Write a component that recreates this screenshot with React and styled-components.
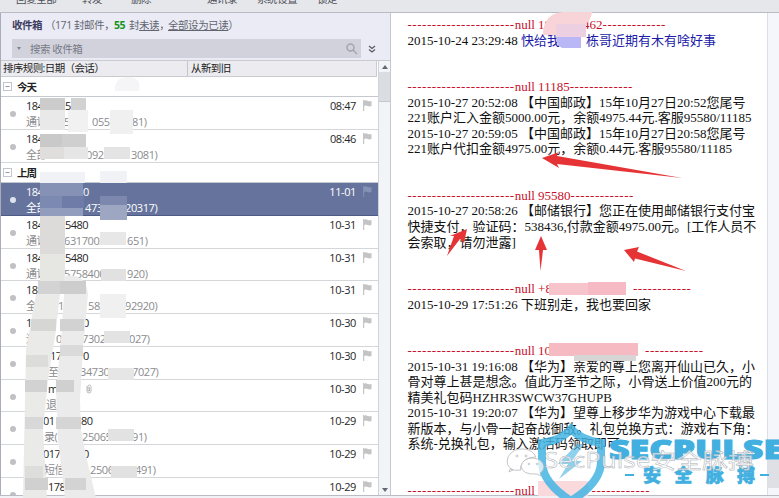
import React from 'react';
import styled, { createGlobalStyle } from 'styled-components';

const GlobalStyle = createGlobalStyle`
  * { box-sizing: border-box; }
  body { margin: 0; background: #fff; overflow: hidden; }
`;

const Window = styled.div`
  position: relative;
  display: flex;
  flex-direction: column;
  width: 779px;
  height: 498px;
  overflow: hidden;
  background: #f1f2f6;
  font-family: 'Open Sans', 'Noto Sans CJK SC', sans-serif;
  font-size: 12px;
  color: #222;
`;

const Toolbar = styled.div`
  flex: none;
  display: flex;
  height: 13px;
  padding-left: 16px;
  background: #e6e7eb;
  border-bottom: 1px solid #b9bcc4;
  overflow: hidden;
`;

const Tool = styled.span`
  width: ${(p) => p.$w}px;
  margin-top: -8px;
  font-size: 10.5px;
  line-height: 15px;
  letter-spacing: -0.4px;
  color: #4d5058;
  white-space: nowrap;
`;

const Body = styled.div`
  flex: none;
  display: flex;
  height: 483px;
  border-bottom: 1px solid #b9bcc3;
`;

const MailPane = styled.section`
  flex: none;
  display: flex;
  flex-direction: column;
  width: 391px;
  border-left: 1px solid #a9adb8;
  border-right: 1px solid #c4c8d2;
  background: #eaebf5;
`;

const Header = styled.header`
  flex: none;
  height: 48px;
  padding: 3px 0 0 11px;
  border-bottom: 1px solid #c9cbd4;
`;

const Title = styled.div`
  display: flex;
  height: 20px;
  line-height: 18px;
  font-size: 10.5px;
  letter-spacing: -0.45px;
  color: #62646e;
  white-space: pre;
  b { color: #3b3c60; }
  strong { color: #16931a; }
  u { text-underline-offset: 1px; }
`;

const TitlePart = styled.span`
  width: ${(p) => p.$w}px;
`;

const SearchRow = styled.div`
  display: flex;
  align-items: center;
  margin-top: 3px;
  gap: 7px;
`;

const SearchBox = styled.div`
  display: flex;
  align-items: center;
  width: 349px;
  height: 19px;
  padding: 0 3px 0 5px;
  background: #d2d2dc;
  color: #777984;
  font-size: 10.5px;
  letter-spacing: -0.5px;
  span { flex: 1; margin-left: 9px; }
`;

const ListArea = styled.div`
  flex: 1;
  display: flex;
  min-height: 0;
`;

const List = styled.div`
  width: 378px;
  background: #fff;
  overflow: hidden;
`;

const SortBar = styled.div`
  display: flex;
  width: 376px;
  height: 16px;
  line-height: 15px;
  padding-left: 2px;
  background: #ececf0;
  border: solid #cacbd0;
  border-width: 0 1px 1px 0;
  font-size: 10.5px;
  letter-spacing: -0.6px;
  color: #222;
`;

const SortCell = styled.span`
  width: ${(p) => p.$w}px;
  padding-left: ${(p) => (p.$split ? 3 : 0)}px;
  border-left: ${(p) => (p.$split ? '1px solid #c3c4cc' : 'none')};
`;

const Group = styled.div`
  display: flex;
  align-items: center;
  gap: 5px;
  height: ${(p) => p.$h}px;
  padding-left: 2px;
  border-bottom: 1px solid #c4c8cf;
  font-size: 10.5px;
  font-weight: 700;
  letter-spacing: -0.9px;
`;

const Row = styled.div`
  display: flex;
  height: 32.75px;
  padding: 1px 6px 0 9px;
  border-bottom: 1px solid ${(p) => (p.$active ? '#4e5b86' : '#d5d6da')};
  background: ${(p) => (p.$active ? '#66749d' : '#fff')};
  color: ${(p) => (p.$active ? '#fff' : '#262626')};
`;

const Dot = styled.i`
  width: 6px;
  height: 6px;
  margin: 13px 10px 0 0;
  border-radius: 3px;
  background: ${(p) => (p.$active ? '#dfe3ee' : '#c0c0c5')};
`;

const Lines = styled.div`
  flex: 1;
  min-width: 0;
`;

const TextLine = styled.div`
  display: flex;
  height: 16px;
  line-height: 16px;
  font-size: 11px;
  letter-spacing: ${(p) => (p.$sub ? -0.4 : -0.55)}px;
  white-space: nowrap;
  color: ${(p) => (p.$sub && !p.$active ? '#8b8b8e' : 'inherit')};
`;

const Piece = styled.span`
  flex: none;
  width: ${(p) => p.$w}px;
`;

const When = styled.div`
  display: flex;
  justify-content: flex-end;
  gap: 7px;
  height: 16px;
  line-height: 16px;
  font-size: 11px;
  letter-spacing: -0.4px;
  svg { margin-top: 2px; }
`;

const Scroll = styled.div`
  display: flex;
  flex-direction: column;
  justify-content: space-between;
  align-items: center;
  width: 12px;
  border-left: 1px solid #cfd3dc;
  background: #f3f4f7;
`;

const Thumb = styled.div`
  width: 11px;
  height: 30px;
  margin-bottom: auto;
  background: #dcdde3;
  border-bottom: 1px solid #c6c8d0;
`;

const ArrowBox = styled.div`
  display: flex;
  justify-content: center;
  align-items: center;
  height: 11px;
`;

const Reader = styled.section`
  flex: 1;
  display: flex;
  background: #fff;
`;

const Message = styled.div`
  width: 376px;
  padding: 4.3px 0 0 16.5px;
  overflow: hidden;
  font-family: 'Liberation Serif', 'Noto Sans CJK SC', serif;
  font-size: 13px;
  color: #111;
`;

const MsgLine = styled.div`
  display: flex;
  height: 15.53px;
  line-height: 15.53px;
  white-space: pre;
  color: ${(p) => (p.$head ? '#c8102a' : 'inherit')};
`;

const Blue = styled.span`
  color: #1c1ca8;
`;

const Dashes = styled.span`
  letter-spacing: 0.54px;
`;

const ReaderScroll = styled.div`
  flex: 1;
  display: flex;
  align-items: flex-end;
  border-left: 1px solid #dcdfe8;
  background: #f5f6fb;
`;

const ReaderThumb = styled.div`
  width: 11px;
  height: 28px;
  margin-bottom: 7px;
  background: #dfe0e6;
`;

const Overlay = styled.svg`
  position: absolute;
  inset: 0;
  pointer-events: none;
`;

const Flag = ({ active }) => (
  <svg width="9" height="11" viewBox="0 0 9 11">
    <path d="M.7 0v11" stroke={active ? '#8592b7' : '#bbb'} strokeWidth="1" />
    <path d="M1 .7q2-.8 3.8.3q1.7.7 3.7 0v5q-2 .8-3.8.1Q3 5.200 1 6z" fill={active ? '#8592b7' : '#c4c4c6'} />
  </svg>
);

const Collapse = () => (
  <svg width="9" height="9" viewBox="0 0 9 9">
    <rect x=".5" y=".5" width="8" height="8" fill="#fff" stroke="#c3c6cc" />
    <path d="M2.500 4.500h4" stroke="#8d98ae" />
  </svg>
);

const rows = [
  { a: [['184', 39], ['5', 12]], b: [['通讯', 38], ['5', 28], ['0553', 40], ['81)', 20]], t: '08:47' },
  { a: [['184', 39]], b: [['全部', 60], ['0920', 45], ['3081)', 30]], t: '08:46' },
  { a: [['184', 57], ['0', 10]], b: [['全部', 59], ['473', 40], ['20317)', 34]], t: '11-01', active: true },
  { a: [['184', 39], ['5480', 30]], b: [['通讯', 38], ['6317002', 63], ['651)', 30]], t: '10-31' },
  { a: [['184', 39], ['5480', 30]], b: [['通讯', 38], ['5758400', 63], ['920)', 30]], t: '10-31' },
  { a: [['18', 39]], b: [['全', 32], ['1', 30], ['584', 37], ['92920)', 34]], t: '10-31' },
  { a: [['1', 57], ['0', 10]], b: [['通', 30], ['0', 26], ['7302', 47], ['027)', 30]], t: '10-30' },
  { a: [['', 24], ['17', 33], ['0', 10]], b: [['', 22], ['至', 32], ['34730', 52], ['7027)', 34]], t: '10-30' },
  { a: [['', 22], ['m', 38]], b: [['', 20], ['退', 20]], t: '10-30', clip: true },
  { a: [['', 17], ['01', 38], ['80', 14]], b: [['', 18], ['录(', 38], ['25065', 50], ['91)', 25]], t: '10-29' },
  { a: [['', 17], ['017', 40], ['0', 10]], b: [['', 18], ['短信', 46], ['2506', 45], ['491)', 30]], t: '10-29' },
  { a: [['', 22], ['178', 40]], b: [], t: '10-29' },
];

const Clip = () => (
  <svg width="6" height="13" viewBox="0 0 6 13">
    <path d="M1 5v5a2 2 0 0 0 4 0V5.500a1.500 1.500 0 0 0-3 0V10h1.500V6" fill="none" stroke="#aaa" strokeWidth=".8" />
  </svg>
);

const Mail = ({ item }) => (
  <Row $active={item.active}>
    <Dot $active={item.active} />
    <Lines>
      <TextLine>
        {item.a.map(([s, w], i) => <Piece key={i} $w={w}>{s}</Piece>)}
        {item.clip && <Clip />}
      </TextLine>
      <TextLine $sub $active={item.active}>
        {item.b.map(([s, w], i) => <Piece key={i} $w={w}>{s}</Piece>)}
      </TextLine>
    </Lines>
    <When>{item.t}<Flag active={item.active} /></When>
  </Row>
);

const Head = ({ id, gap = 0, end = '', tail = 13 }) => (
  <MsgLine $head>
    <Dashes>{'-'.repeat(22)}</Dashes>null {id}
    <Piece $w={gap} />{end}
    <Dashes>{'-'.repeat(tail)}</Dashes>
  </MsgLine>
);

const Blank = ({ n }) => Array.from({ length: n }, (_, i) => <MsgLine key={i} />);

// Mosaic tiles covering private details: x, y, width, height, colour
const tiles = [
  [40, 98, 25, 12, '#cdcccc'], [71, 98, 15, 12, '#d3d2d2'], [40, 110, 25, 20, '#e9e9e9'], [68, 110, 20, 22, '#f1f1f1'],
  [110, 110, 23, 24, '#f0f0f1'], [40, 134, 22, 13, '#cac9c9'], [62, 134, 24, 13, '#d0cfcf'],
  [40, 147, 24, 12, '#dfdedd'], [64, 147, 24, 12, '#e7e6e6'], [104, 147, 26, 12, '#e4e4e4'],
  [40, 172, 45, 11, '#f1f2f5'], [100, 171, 27, 12, '#f1f2f5'],
  [40, 183, 43, 13, '#8591b5'], [40, 196, 22, 12, '#7c89b0'], [62, 196, 22, 12, '#6e7ca7'], [40, 208, 43, 8, '#929dbd'],
  [100, 196, 27, 9, '#7c88ae'], [100, 205, 27, 15, '#9da7c2'],
  [40, 216, 25, 38, '#dcdbda'], [40, 254, 25, 27, '#e6e6e3'], [100, 232, 26, 13, '#e7e7e7'], [101, 269, 25, 12, '#e1e1e2'],
  [38, 281, 22, 13, '#d4d3d3'], [60, 281, 26, 13, '#cecdcd'], [100, 294, 26, 24, '#f0f0f0'],
  [104, 331, 26, 12, '#e3e3e3'], [108, 368, 26, 12, '#e6e6e6'], [108, 429, 26, 12, '#e2e2e2'], [111, 466, 26, 12, '#e1e1e2'],
];
const darkTiles = [
  [38, 281, 22, 13, '#d4d3d3'], [60, 281, 26, 13, '#cecdcd'],
  [31, 319, 25, 12, '#d6d6d5'], [60, 319, 24, 12, '#d3d2d2'], [26, 355, 22, 12, '#dcdcdb'], [60, 345, 23, 11, '#dadada'],
  [25, 380, 22, 12, '#d2d2d2'], [56, 380, 18, 12, '#d0d0d0'], [25, 417, 18, 12, '#d8d8d8'], [56, 417, 25, 12, '#d5d5d5'],
  [25, 466, 18, 12, '#dddddc'], [25, 478, 23, 12, '#cfd0cf'], [65, 478, 21, 12, '#d3d3d3'],
];
const Tile = ({ t }) => <rect x={t[0]} y={t[1]} width={t[2]} height={t[3]} fill={t[4]} />;

const Annotations = () => (
  <Overlay width="779" height="498" viewBox="0 0 779 498">
    <path d="M115 91q-1-14 13-14t11 14z" fill="#f5f5f8" />
    {tiles.map((t, i) => <Tile key={i} t={t} />)}
    <path d="M36 294H60L56 330L48 380L43 430L47 498H23L26 350z" fill="#eaeae9" />
    <path d="M64 294V276Q86 272 88 294L83 350L80 400L81 430L87 460L96 498H65L58 440L56 390L61 340z" fill="#ebebeb" />
    {darkTiles.map((t, i) => <Tile key={i} t={t} />)}

    <path d="M543 35Q543 13 564 12H592Q591 20 586 24V35z" fill="#f8d3d8" />
    <rect x="556" y="24" width="30" height="13" fill="#edcfe2" />
    <path d="M556 37H581V48H562Q556 45 556 37z" fill="#b9b7f6" />
    <path d="M549 283H626V295H549z" fill="#f8c4cc" />
    <rect x="588" y="282" width="38" height="13" fill="#f6bac4" />
    <rect x="549" y="343" width="89" height="13" fill="#f5bac2" />
    <rect x="574" y="355" width="62" height="6" fill="#d8d5d6" />
    <path d="M538 481H588V496H538z" fill="#f9d9dc" />

    <g fill="#e63436">
      <path d="M542 158L558 152.500L557 156L682 178L557 164L559 168z" />
      <path d="M467 229L464 243L460 239L447 256L454 236L450 236z" />
      <path d="M541 236L547 250H543L540.500 271L539 250H535z" />
      <path d="M624 250L639 247L637 251.500L686 271L635 258.500L634 262z" />
    </g>

    <path d="M542 443Q562 440 571 429Q581 440 601 443V463Q600 483 571 501Q543 483 542 463z" fill="none" stroke="#43b4e3" strokeOpacity=".85" strokeWidth="8" />
    <path d="M577 444L558 464H568L559 479L582 461H572L584 444z" fill="#43b4e3" fillOpacity=".6" />
    <g fill="#41afe0" fontFamily="'Open Sans', 'Noto Sans CJK SC', sans-serif" fontWeight="800">
      <text x="609" y="459" fontSize="26" textLength="174" lengthAdjust="spacingAndGlyphs" stroke="#41afe0" strokeWidth="1">SECPULSE</text>
      <path d="M625 474h9v2h-9zM760 474h9v2h-9z" />
      <text x="643" y="482" fontSize="18" textLength="112" stroke="#41afe0" strokeWidth=".6">安全脉搏</text>
    </g>
    <g fill="#fff" stroke="#b5b8bd" strokeWidth=".8" fillOpacity=".7">
      <path d="M510 469l-1 3 4-2q-8-4-5-13q5-9 16-8q9 1 12 8q-12 0-15 9q-1 2 0 4q-6 1-11-1z" />
      <path d="M521 466q2-8 12-8q10 1 11 9q-1 5-4 6l1 3-4-2q-15 1-16-8z" />
      <circle cx="517" cy="456" r="1" /><circle cx="526" cy="456" r="1" />
      <circle cx="529" cy="464" r=".8" /><circle cx="537" cy="464" r=".8" />
    </g>
    <text x="544" y="468" fontFamily="'Open Sans', 'Noto Sans CJK SC', sans-serif" fontSize="21" textLength="210" lengthAdjust="spacingAndGlyphs" fill="#fff" fillOpacity=".7" stroke="#a9adb4" strokeWidth=".45">SecPulse安全脉搏</text>
  </Overlay>
);

const tools = [['回复全部', 66], ['转发', 49], ['删除', 76], ['通讯录', 50], ['系统设置', 60], ['锁定', 60]];

export default function App() {
  return (
    <Window>
      <GlobalStyle />
      <Toolbar>{tools.map(([s, w]) => <Tool key={s} $w={w}>{s}</Tool>)}</Toolbar>
      <Body>
        <MailPane>
          <Header>
            <Title>
              <TitlePart $w={33}><b>收件箱</b></TitlePart>
              <TitlePart $w={69}>（171 封邮件，</TitlePart>
              <TitlePart $w={15}><strong>55</strong></TitlePart>
              <TitlePart $w={39}>封<u>未读</u>，</TitlePart>
              <span><u>全部设为已读</u>）</span>
            </Title>
            <SearchRow>
              <SearchBox>
                <svg width="4" height="3"><path d="M0 0h4L2 3z" fill="#81838c" /></svg>
                <span>搜索 收件箱</span>
                <svg width="12" height="12" viewBox="0 0 12 12" fill="none" stroke="#a3a4ae" strokeWidth="1.5"><circle cx="4.500" cy="4.500" r="3.500" /><path d="M7 7l4 4" /></svg>
              </SearchBox>
              <svg width="8" height="8" viewBox="0 0 8 8" fill="none" stroke="#555862" strokeWidth="1.200"><path d="M1 1l3 2.500L7 1M1 4.500L4 7l3-2.500" /></svg>
            </SearchRow>
          </Header>
          <ListArea>
            <List>
              <SortBar>
                <SortCell $w={184}>排序规则:日期（会话）</SortCell>
                <SortCell $w={150} $split>从新到旧</SortCell>
              </SortBar>
              <Group $h={20}><Collapse />今天</Group>
              {rows.slice(0, 2).map((r, i) => <Mail key={i} item={r} />)}
              <Group $h={20.6}><Collapse />上周</Group>
              {rows.slice(2).map((r, i) => <Mail key={i} item={r} />)}
            </List>
            <Scroll>
              <ArrowBox><svg width="6" height="4"><path d="M0 4L3 0l3 4z" fill="#656872" /></svg></ArrowBox>
              <Thumb />
              <ArrowBox><svg width="6" height="4"><path d="M0 0h6L3 4z" fill="#656872" /></svg></ArrowBox>
            </Scroll>
          </ListArea>
        </MailPane>
        <Reader>
          <Message>
            <Head id="18" gap={32} end="462" />
            <MsgLine>2015-10-24 23:29:48 <Blue>快给我</Blue><Piece $w={26} /><Blue>栋哥近期有木有啥好事</Blue></MsgLine>
            <Blank n={2} />
            <Head id="11185" />
            <MsgLine>2015-10-27 20:52:08 【中国邮政】15年10月27日20:52您尾号</MsgLine>
            <MsgLine>221账户汇入金额5000.00元，余额4975.44元.客服95580/11185</MsgLine>
            <MsgLine>2015-10-27 20:59:05 【中国邮政】15年10月27日20:58您尾号</MsgLine>
            <MsgLine>221账户代扣金额4975.00元，余额0.44元.客服95580/11185</MsgLine>
            <Blank n={2} />
            <Head id="95580" />
            <MsgLine>2015-10-27 20:58:26 【邮储银行】您正在使用邮储银行支付宝</MsgLine>
            <MsgLine>快捷支付，验证码：538436,付款金额4975.00元。[工作人员不</MsgLine>
            <MsgLine>会索取，请勿泄露]</MsgLine>
            <Blank n={2} />
            <Head id="+8" gap={81} tail={12} />
            <MsgLine>2015-10-29 17:51:26 下班别走，我也要回家</MsgLine>
            <Blank n={2} />
            <Head id="10" gap={94} tail={12} />
            <MsgLine>2015-10-31 19:16:08 【华为】亲爱的尊上您离开仙山已久，小</MsgLine>
            <MsgLine>骨对尊上甚是想念。值此万圣节之际，小骨送上价值200元的</MsgLine>
            <MsgLine>精美礼包码HZHR3SWCW37GHUPB</MsgLine>
            <MsgLine>2015-10-31 19:20:07 【华为】望尊上移步华为游戏中心下载最</MsgLine>
            <MsgLine>新版本，与小骨一起奋战御敌。礼包兑换方式：游戏右下角：</MsgLine>
            <MsgLine>系统-兑换礼包，输入激活码领取即可</MsgLine>
            <Blank n={2} />
            <Head id="1" gap={47} tail={12} />
          </Message>
          <ReaderScroll><ReaderThumb /></ReaderScroll>
        </Reader>
      </Body>
      <Annotations />
    </Window>
  );
}
